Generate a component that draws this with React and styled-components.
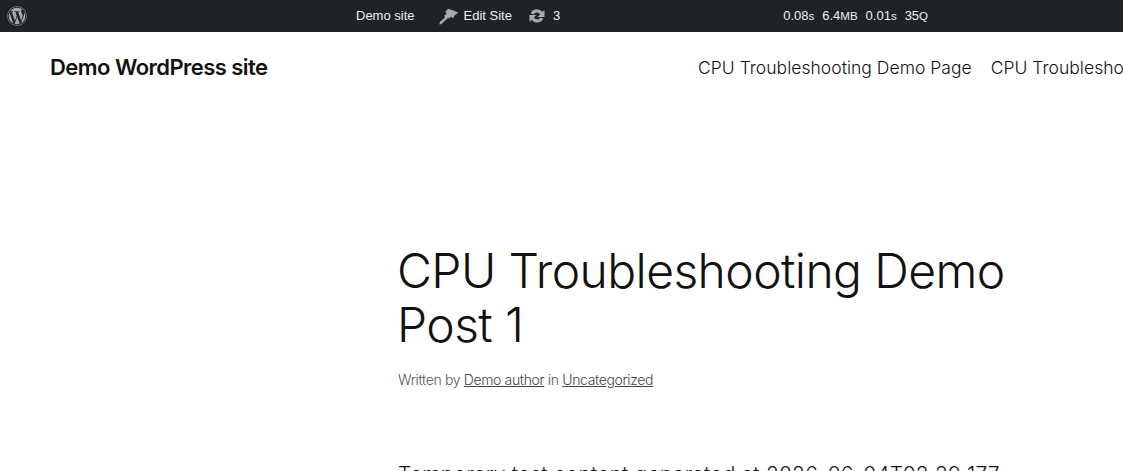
import React from "react";
import styled, { createGlobalStyle } from "styled-components";
import { FaWordpress } from "react-icons/fa";

const Global = createGlobalStyle`
  html, body {
    margin: 0;
    height: 100%;
    overflow: hidden;
    background: #fff;
  }
`;

const AdminBar = styled.div`
  display: flex;
  align-items: center;
  height: 32px;
  background: #1d2327;
  color: #f0f0f1;
  font: 13px/32px "Liberation Sans", Arial, sans-serif;
  white-space: nowrap;
`;

const AdminLogo = styled.div`
  display: flex;
  width: 356px;
  padding-left: 7px;
  box-sizing: border-box;
  color: #a7aaad;
  font-size: 20px;
`;

const AdminItem = styled.span`
  display: flex;
  align-items: center;
  gap: ${(p) => p.$gap || 0}px;
  margin-right: ${(p) => p.$right || 0}px;
`;

const AdminIcon = styled.svg`
  width: 20px;
  height: 20px;
  fill: #a7aaad;
`;

const Stats = styled.div`
  display: flex;
  gap: 8px;
  margin-left: 223px;
  small {
    font-size: 11.5px;
  }
`;

const Header = styled.header`
  display: flex;
  justify-content: space-between;
  align-items: center;
  height: 71px;
  padding-left: 50px;
  white-space: nowrap;
  font-family: Inter, "Noto Sans", sans-serif;
  color: #111;
`;

const SiteTitle = styled.div`
  font-size: 22px;
  line-height: 26px;
  margin-top: -1px;
  font-weight: 600;
  letter-spacing: -0.55px;
`;

const Nav = styled.nav`
  display: flex;
  gap: 19px;
  width: 425px;
  overflow: hidden;
  font-size: 17.5px;
  font-weight: 300;
  letter-spacing: 0.03px;
`;

const Article = styled.article`
  padding: 141px 0 0 398px;
  width: 625px;
  font-family: Inter, "Noto Sans", sans-serif;
  color: #111;
`;

const Title = styled.h1`
  margin: 0 0 0 -1px;
  font-size: 48px;
  line-height: 54px;
  font-weight: 300;
  letter-spacing: -0.58px;
`;

const Meta = styled.div`
  margin-top: 19px;
  font-size: 14px;
  font-weight: 300;
  letter-spacing: -0.35px;
  color: #555;
  a {
    color: #444;
    text-decoration: underline;
  }
`;

const Body = styled.p`
  margin: 74px 0 0;
  font-size: 21px;
  font-weight: 300;
  letter-spacing: 0.18px;
  white-space: nowrap;
`;

export default function App() {
  return (
    <>
      <Global />
      <AdminBar>
        <AdminLogo>
          <FaWordpress />
        </AdminLogo>
        <AdminItem $right={24}>Demo site</AdminItem>
        <AdminItem $gap={5} $right={15}>
          <AdminIcon viewBox="0 0 20 20">
            <path d="M.3 18.4 1 15.8l5-4.4-.8-1.6 2.4-2L6.4 5.2 9.2 2.8 19.4 6.6l-3.6 2.6-2 3-1.8-1.6-1.8 1.8-1-.7-2 2-5.2 4.6z" />
          </AdminIcon>
          Edit Site
        </AdminItem>
        <AdminItem $gap={6}>
          <AdminIcon viewBox="0 0 20 20">
            <path d="M10 3.2a6.8 6.8 0 0 1 5.3 2.6L17.5 4v7h-7l2.6-2.6A3.7 3.7 0 0 0 6.6 8.5L3.7 7.3A6.8 6.8 0 0 1 10 3.2zM2.5 9h7l-2.6 2.6a3.7 3.7 0 0 0 6.5-.1l2.9 1.2a6.8 6.8 0 0 1-11.6 1L2.5 16V9z" />
          </AdminIcon>
          3
        </AdminItem>
        <Stats>
          <span>0.08<small>s</small></span>
          <span>6.4<small>MB</small></span>
          <span>0.01<small>s</small></span>
          <span>35<small>Q</small></span>
        </Stats>
      </AdminBar>
      <Header>
        <SiteTitle>Demo WordPress site</SiteTitle>
        <Nav>
          <span>CPU Troubleshooting Demo Page</span>
          <span>CPU Troubleshooting Demo Page</span>
        </Nav>
      </Header>
      <Article>
        <Title>CPU Troubleshooting Demo Post 1</Title>
        <Meta>
          Written by <a href="#a">Demo author</a> in <a href="#c">Uncategorized</a>
        </Meta>
        <Body>Temporary test content generated at 2026-06-04T02:29:177</Body>
      </Article>
    </>
  );
}
